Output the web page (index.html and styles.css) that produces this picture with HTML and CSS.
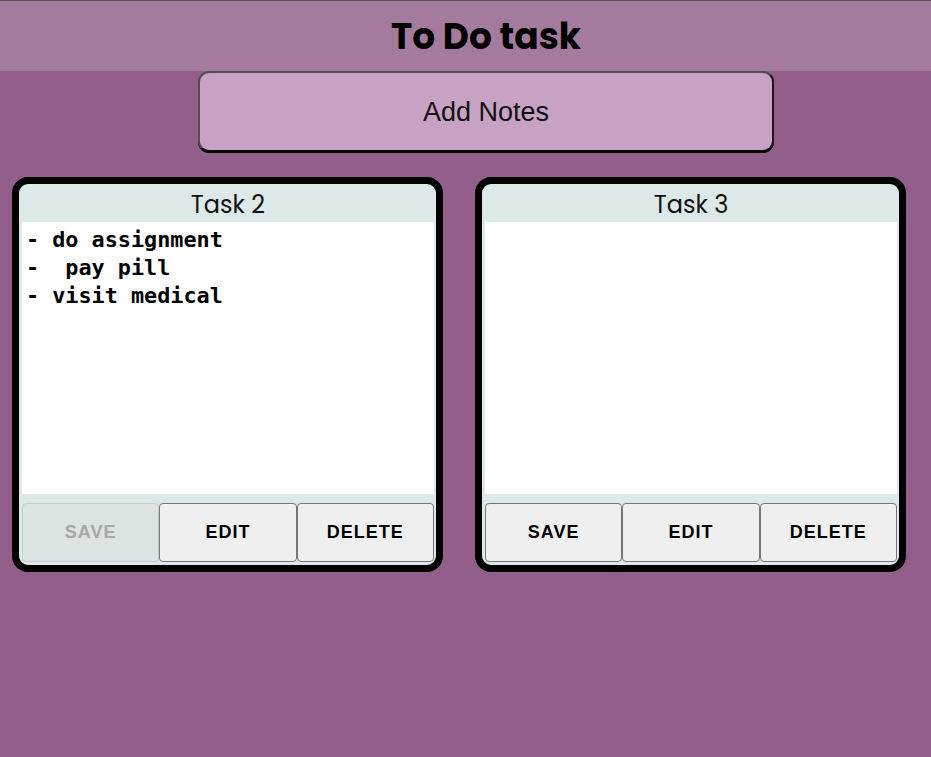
FILE: index.html
```html
<!DOCTYPE html>
<html lang="en">
<head>
<meta charset="utf-8">
<title>To Do task</title>
<link rel="stylesheet" href="styles.css">
</head>
<body>
<header class="header"><h1 class="title">To Do task</h1></header>
<button class="add-btn" type="button">Add Notes</button>
<main class="cards">
  <section class="card">
    <div class="card-title">Task 2</div>
    <textarea class="note" readonly>- do assignment
-  pay pill
- visit medical</textarea>
    <div class="actions">
      <button class="btn" type="button" disabled>SAVE</button>
      <button class="btn" type="button">EDIT</button>
      <button class="btn" type="button">DELETE</button>
    </div>
  </section>
  <section class="card">
    <div class="card-title">Task 3</div>
    <textarea class="note" readonly></textarea>
    <div class="actions">
      <button class="btn" type="button">SAVE</button>
      <button class="btn" type="button">EDIT</button>
      <button class="btn" type="button">DELETE</button>
    </div>
  </section>
</main>
</body>
</html>
```
FILE: styles.css
```css
html, body {
  margin: 0;
  padding: 0;
}
body {
  background: #945e8a;
  min-height: 756px;
  border-top: 1px solid #555555;
  font-family: "Liberation Sans", Arial, sans-serif;
}
.header {
  background: #a57b9d;
  height: 70px;
  display: flex;
  align-items: center;
  justify-content: center;
  padding-left: 41px;
}
.title {
  margin: 0;
  font-family: "Poppins", Inter, sans-serif;
  font-weight: 700;
  font-size: 36px;
  color: #000;
}
.add-btn {
  display: block;
  box-sizing: border-box;
  margin: 0 0 0 198px;
  width: 576px;
  height: 81px;
  background: #c8a2c4;
  border: 2px solid #4f4f4f;
  border-bottom-color: #000;
  border-right-color: #1a1a1a;
  border-radius: 11px;
  box-shadow: 0 1px 0 #000;
  font-family: "Liberation Sans", Arial, sans-serif;
  font-size: 27px;
  color: #111;
  padding: 2px 0 0;
}
.cards {
  display: grid;
  grid-template-columns: 431px 431px;
  column-gap: 32px;
  padding-left: 12px;
  margin-top: 25px;
}
.card {
  box-sizing: border-box;
  height: 395px;
  border: 7px solid #000;
  border-radius: 16px;
  background: #dce9e8;
  display: flex;
  flex-direction: column;
  padding: 0 2px 3px 3px;
  overflow: hidden;
}
.card-title {
  height: 38px;
  padding-top: 3px;
  box-sizing: border-box;
  display: flex;
  align-items: center;
  justify-content: center;
  font-family: "Poppins", Inter, sans-serif;
  font-size: 24px;
  color: #111;
}
.note {
  display: block;
  box-sizing: border-box;
  width: 100%;
  height: 272px;
  margin: 0;
  border: 0;
  outline: none;
  resize: none;
  background: #fff;
  padding: 4px 4px;
  font-family: "DejaVu Sans Mono", "Liberation Mono", monospace;
  font-weight: bold;
  font-size: 21.8px;
  line-height: 28px;
  color: #000;
  overflow: hidden;
}
.actions {
  margin-top: 9px;
  height: 59px;
  display: grid;
  grid-template-columns: repeat(3, 1fr);
}
.btn {
  box-sizing: border-box;
  height: 59px;
  margin: 0;
  padding: 0;
  border: 1px solid #767676;
  border-radius: 4px;
  background: #efefef;
  font-family: "Liberation Sans", Arial, sans-serif;
  font-weight: bold;
  font-size: 18px;
  letter-spacing: 1px;
  color: #000;
}
.btn:disabled {
  background: #dbe4e3;
  border-color: #c4cdcc;
  color: #a4a8a8;
}
```
